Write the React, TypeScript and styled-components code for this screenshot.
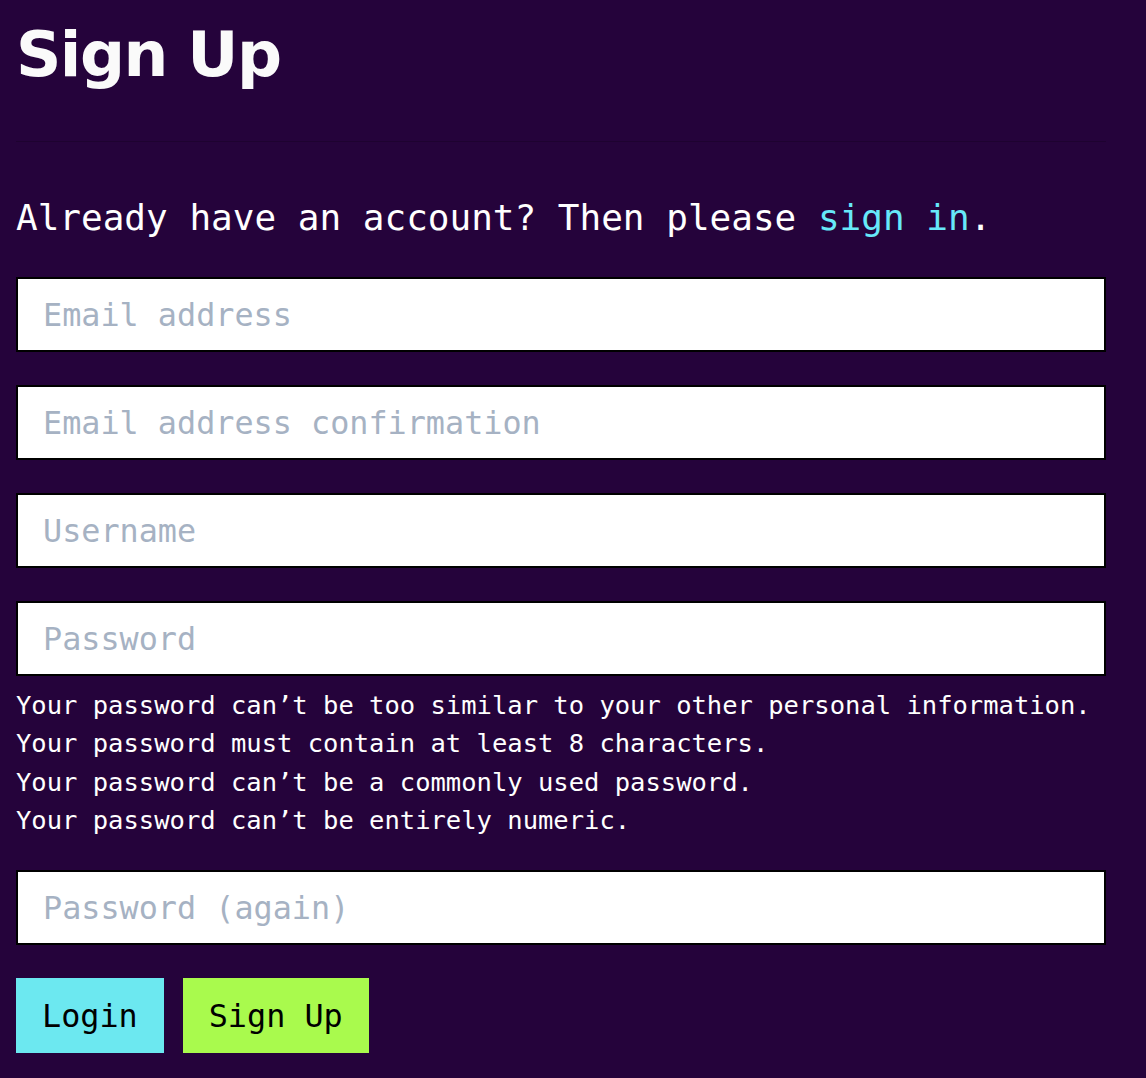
import React from "react";
import styled, { createGlobalStyle } from "styled-components";

const GlobalStyle = createGlobalStyle`
  html, body {
    margin: 0;
    padding: 0;
    background: #25033b;
  }
  body {
    font-family: "DejaVu Sans Mono", "Liberation Mono", monospace;
    color: #ffffff;
  }
  * { box-sizing: border-box; }
`;

const Page = styled.main`
  width: 1090px;
  margin-left: 16px;
  min-height: 1078px;
`;

const Header = styled.header`
  padding-top: 16px;
  padding-bottom: 48px;
  border-bottom: 1px solid rgba(0, 0, 0, 0.18);
`;

const Title = styled.h1`
  margin: 0;
  font-family: "DejaVu Sans", "Liberation Sans", sans-serif;
  font-weight: 700;
  font-size: 63px;
  line-height: 77px;
  letter-spacing: -1.5px;
  color: #fafafa;
`;

const Lead = styled.p`
  margin: 49px 0 32px;
  font-size: 36px;
  line-height: 54px;
  color: #ffffff;
  white-space: nowrap;
`;

const Link = styled.a`
  color: #67e8f9;
  text-decoration: none;
`;

const Form = styled.form`
  display: flex;
  flex-direction: column;
`;

const Field = styled.div<{ $gap: number }>`
  margin-bottom: ${(p) => p.$gap}px;
`;

const Input = styled.input`
  display: block;
  width: 100%;
  height: 75px;
  border: 2px solid #000;
  border-radius: 0;
  background: #ffffff;
  padding: 0 25px;
  font-family: "DejaVu Sans Mono", "Liberation Mono", monospace;
  font-size: 31.8px;
  color: #1a202c;
  outline: none;
  &::placeholder {
    color: #a6b2c3;
  }
`;

const HelpList = styled.ul`
  list-style: none;
  margin: 10px 0 0;
  padding: 0;
  font-size: 25.5px;
  line-height: 38.4px;
  color: #ffffff;
  white-space: nowrap;
`;

const Actions = styled.div`
  display: flex;
  gap: 19px;
`;

const Button = styled.button<{ $bg: string }>`
  height: 75px;
  padding: 0 26px;
  border: none;
  border-radius: 0;
  background: ${(p) => p.$bg};
  color: #000;
  font-family: "DejaVu Sans Mono", "Liberation Mono", monospace;
  font-size: 31.8px;
  cursor: pointer;
`;

export default function App() {
  return (
    <>
      <GlobalStyle />
      <Page>
        <Header>
          <Title>Sign Up</Title>
        </Header>
        <Lead>
          Already have an account? Then please <Link href="#">sign in</Link>.
        </Lead>
        <Form onSubmit={(e) => e.preventDefault()}>
          <Field $gap={33}>
            <Input type="email" placeholder="Email address" />
          </Field>
          <Field $gap={33}>
            <Input type="email" placeholder="Email address confirmation" />
          </Field>
          <Field $gap={33}>
            <Input type="text" placeholder="Username" />
          </Field>
          <Field $gap={30}>
            <Input type="password" placeholder="Password" />
            <HelpList>
              <li>Your password can’t be too similar to your other personal information.</li>
              <li>Your password must contain at least 8 characters.</li>
              <li>Your password can’t be a commonly used password.</li>
              <li>Your password can’t be entirely numeric.</li>
            </HelpList>
          </Field>
          <Field $gap={33}>
            <Input type="password" placeholder="Password (again)" />
          </Field>
          <Actions>
            <Button type="button" $bg="#6ce8f0">Login</Button>
            <Button type="submit" $bg="#a9fa4d">Sign Up</Button>
          </Actions>
        </Form>
      </Page>
    </>
  );
}
